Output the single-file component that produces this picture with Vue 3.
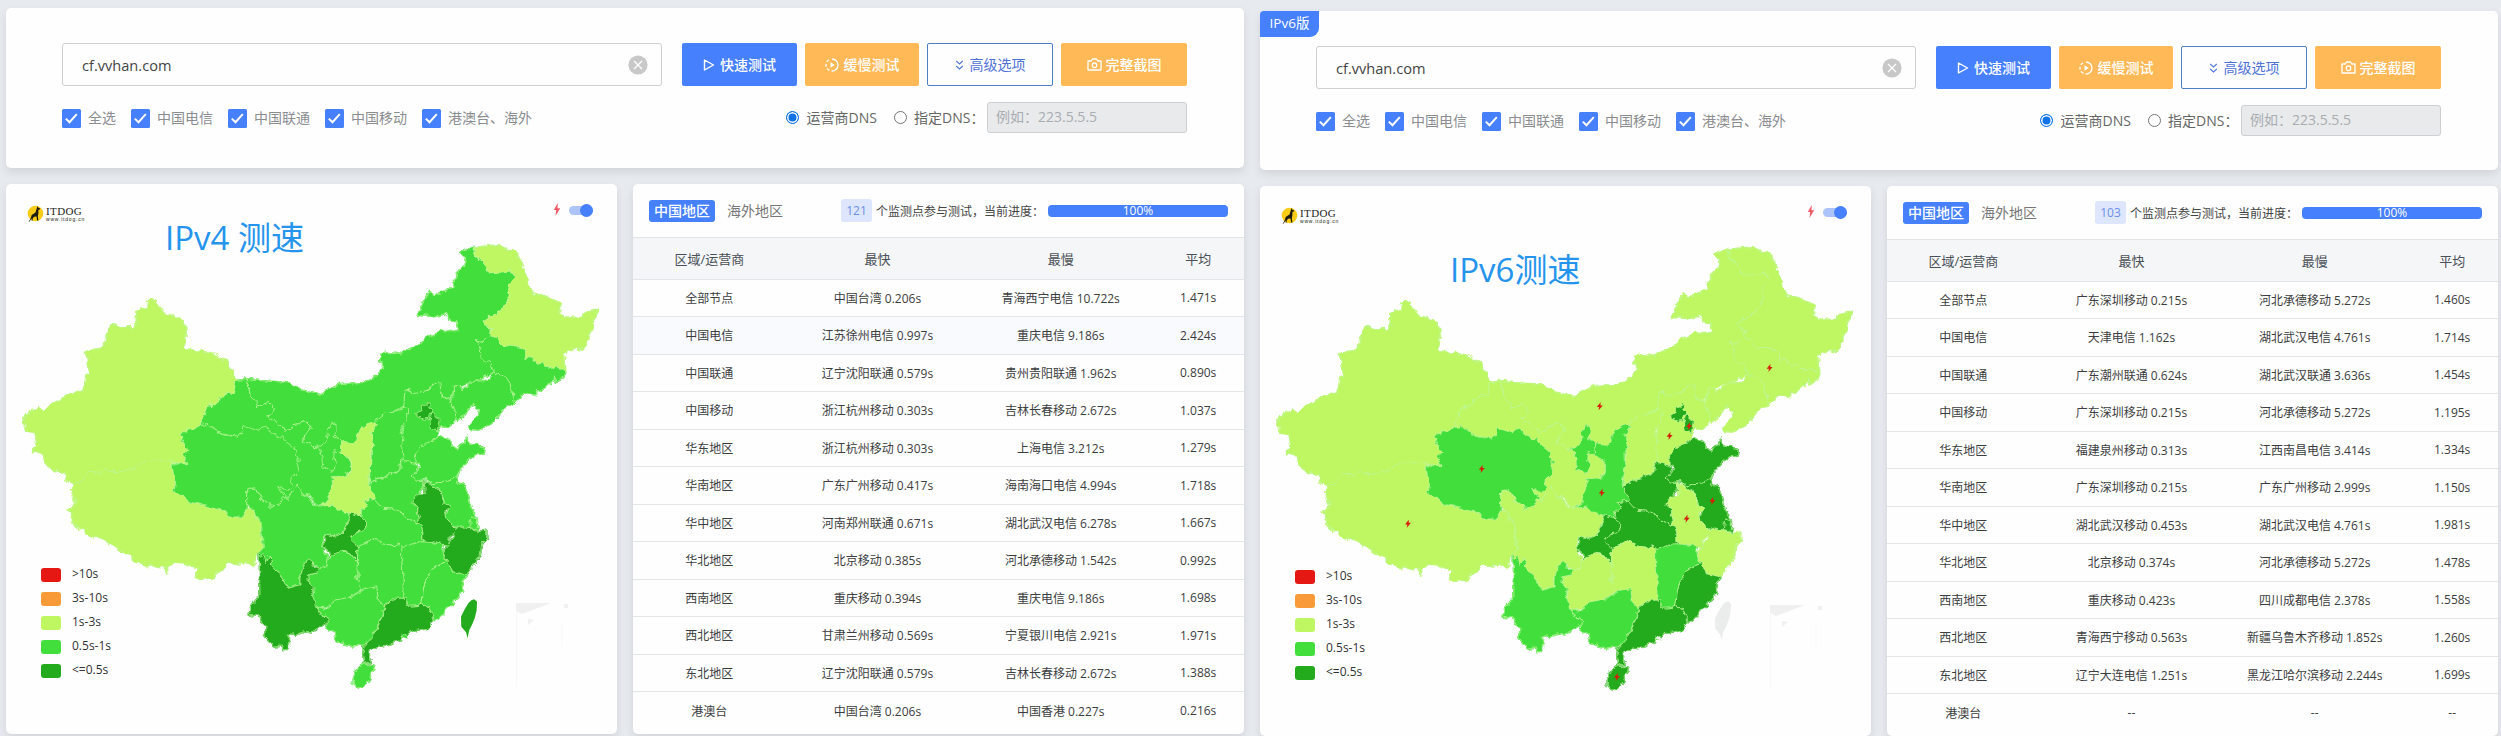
<script setup>
const L = '#bef761'
const M = '#42df3c'
const D = '#23aa1d'
const G = '#ebecec'

// Province outlines. Space "a" covers the whole country, space "c" is the finer eastern grid.
const provinces = [
  ['neimenggu', 'a', '612,563 700,570 717,573 745,588 772,596 795,605 845,577 905,574 930,555 955,530 945,505 955,483 1000,493 1020,472 1045,467 1060,445 1100,425 1142,425 1135,400 1120,392 1105,378 1085,385 1040,382 1050,350 1067,315 1090,323 1128,303 1128,290 1145,250 1160,235 1158,215 1147,208 1155,197 1183,190 1175,210 1203,228 1215,260 1265,255 1280,268 1268,300 1265,330 1250,365 1203,400 1220,425 1222,445 1190,455 1195,475 1198,500 1220,515 1228,540 1200,560 1150,580 1130,580 1125,610 1100,615 1095,580 1075,575 1070,590 1035,605 1022,605 1020,588 1008,590 1005,640 975,655 960,660 955,670 935,682 920,700 885,760 850,745 835,720 812,750 783,752 758,738 755,718 772,705 770,683 730,690 712,706 690,690 664,668 680,640 668,628 640,640 622,605 618,580'],
  ['gansu', 'a', '588,565 612,563 618,580 622,605 640,628 640,640 668,628 680,640 678,655 664,668 678,672 690,690 712,706 730,690 770,683 772,705 755,718 758,738 783,752 820,750 848,765 872,785 875,815 850,840 830,845 825,890 810,912 785,918 775,890 750,885 740,865 700,920 650,880 640,750 607,710 592,725 515,700 498,692 502,680 515,638 530,635 557,605 580,600'],
  ['heilongjiang', 'a', '1183,190 1210,186 1240,183 1255,195 1275,197 1285,205 1300,240 1312,275 1320,315 1365,330 1395,350 1395,380 1410,387 1445,388 1460,372 1490,367 1478,395 1475,420 1450,480 1430,472 1405,490 1408,540 1385,525 1358,532 1350,512 1338,520 1325,503 1308,500 1308,478 1275,470 1245,465 1235,445 1220,440 1218,428 1228,420 1215,418 1203,400 1250,365 1265,330 1268,300 1280,268 1270,250 1265,258 1215,262 1203,228 1190,218 1175,210'],
  ['jilin', 'a', '1188,450 1197,458 1222,440 1235,445 1245,465 1275,470 1308,478 1308,500 1325,503 1338,520 1350,512 1358,532 1385,525 1408,540 1405,557 1385,570 1378,555 1370,575 1350,592 1335,590 1335,608 1308,600 1280,628 1275,600 1268,570 1255,555 1228,540 1220,515 1198,505 1195,475'],
  ['liaoning', 'a', '1228,540 1255,555 1268,570 1275,600 1280,628 1260,640 1240,668 1220,690 1215,695 1190,705 1172,703 1170,690 1185,670 1192,645 1180,632 1165,645 1155,665 1138,680 1135,655 1117,630 1130,610 1128,582 1145,580 1150,592 1185,568 1215,565'],
  ['hebei', 'a', '1005,640 1008,590 1020,588 1025,605 1050,597 1070,592 1075,575 1095,570 1098,612 1120,615 1117,630 1135,655 1138,665 1130,682 1112,697 1098,695 1090,722 1068,740 1042,770 1038,790 1028,800 995,790 1000,770 995,745 1005,720 1000,690 1008,660'],
  ['xinjiang', 'a', '57,685 62,663 80,650 100,643 108,652 128,630 150,622 165,610 210,590 214,550 224,545 216,495 207,486 235,478 258,473 263,450 277,407 300,414 333,414 340,402 338,372 366,358 368,338 386,338 392,352 410,376 447,390 462,412 463,438 458,470 466,480 525,487 563,511 575,540 588,565 583,590 580,600 557,605 530,635 515,638 502,680 498,692 485,700 446,715 458,722 453,738 460,750 469,762 458,778 465,800 430,796 415,790 385,786 355,797 345,808 310,824 275,822 265,815 250,828 218,824 205,845 200,857 185,860 168,848 162,825 135,818 114,803 107,770 82,763 90,755 86,716 64,710 66,692'],
  ['xizang', 'a', '200,857 205,845 218,824 250,828 265,815 275,822 310,824 345,808 355,797 385,786 415,790 430,796 428,805 432,830 437,850 434,872 440,885 470,905 500,915 530,925 560,933 570,950 605,950 615,925 625,930 636,950 648,975 650,1010 654,1045 648,1055 636,1062 633,1082 628,1090 612,1075 605,1083 575,1080 565,1083 560,1095 540,1105 530,1122 490,1125 487,1105 495,1095 470,1085 430,1078 417,1090 417,1110 410,1090 385,1090 350,1085 330,1070 328,1055 300,1045 250,1008 235,1008 183,970 178,940 170,930 188,915 182,890 176,872 185,860'],
  ['qinghai', 'a', '446,715 485,700 498,692 515,690 520,698 540,708 565,720 592,725 605,705 607,692 640,702 660,698 700,728 720,745 732,755 735,775 744,795 738,825 725,838 722,855 728,860 718,878 695,865 700,880 712,890 705,905 700,920 685,920 665,912 655,905 640,878 632,868 620,870 613,880 615,925 605,950 570,950 560,933 530,925 500,915 470,905 440,885 434,872 437,850 432,830 428,805 436,800 465,800 458,778 469,762 460,750 453,738 458,722'],
  ['ningxia', 'c', '285,199 302,198 318,186 322,155 335,130 348,130 348,150 342,170 362,184 362,210 340,213 338,235 350,250 342,262 336,280 325,270 308,260 305,225 298,208'],
  ['shanxi', 'c', '468,122 500,100 520,98 550,85 562,85 563,110 555,130 540,145 550,165 545,205 550,235 540,250 540,270 500,285 448,308 452,240 458,190 455,160'],
  ['sichuan', 'c', '118,520 130,500 125,440 110,410 95,385 80,370 80,345 85,325 105,325 120,355 155,380 180,370 190,350 205,360 218,335 232,318 250,345 270,355 280,380 300,378 340,375 390,400 375,450 340,470 312,465 305,500 320,530 325,545 300,565 278,550 265,535 240,585 240,615 205,625 180,585 160,570 148,528 135,548'],
  ['shaanxi', 'c', '468,122 462,150 450,160 460,190 450,215 452,250 445,300 455,325 465,358 428,362 440,375 425,385 422,412 400,402 385,398 355,390 340,375 306,378 330,362 322,345 338,325 336,290 375,288 395,278 395,240 362,215 362,185 395,190 408,185 415,160 432,135'],
  ['henan', 'c', '448,308 500,288 540,270 543,240 585,250 592,258 575,290 590,303 612,305 615,315 600,335 580,375 592,385 600,432 582,425 565,418 545,395 520,388 490,385 468,362 455,330'],
  ['shandong', 'c', '588,245 590,220 615,190 655,175 665,172 695,180 695,200 715,208 740,172 750,192 793,200 790,218 765,225 745,240 712,275 715,290 695,292 690,303 660,305 640,312 618,298 590,303 575,290 605,255'],
  ['jiangsu', 'c', '618,298 640,312 660,305 690,303 700,290 735,320 750,375 765,405 775,440 750,448 705,440 675,415 690,375 675,370 660,330 635,315'],
  ['shanghai', 'c', '752,410 772,418 772,450 748,445'],
  ['anhui', 'c', '612,305 640,318 650,330 665,340 670,370 690,375 688,385 675,388 680,420 705,440 705,455 690,470 685,495 660,492 640,485 630,492 605,475 605,450 590,430 600,415 592,400 595,385 575,370 590,345 615,340 615,325'],
  ['hubei', 'c', '430,362 465,358 490,385 520,388 545,395 565,418 582,425 600,432 605,450 605,475 610,485 560,500 520,500 490,492 460,478 440,490 415,498 412,515 395,490 392,468 425,455 440,440 435,420 422,412 425,390 440,375'],
  ['chongqing', 'c', '392,400 415,405 438,425 440,440 425,455 395,465 400,485 412,505 412,545 395,525 368,510 360,525 330,530 320,510 305,500 318,480 312,465 340,470 360,465 375,450 385,425'],
  ['hunan', 'c', '415,498 440,490 460,478 490,492 520,500 540,490 555,505 545,530 550,600 550,655 520,655 490,680 475,660 470,625 440,625 420,635 410,610 415,590 412,540'],
  ['jiangxi', 'c', '545,500 600,485 640,488 670,495 665,510 680,545 640,560 620,590 610,630 605,675 585,678 565,685 560,660 548,655 550,600 545,540'],
  ['zhejiang', 'c', '705,445 725,438 750,448 775,455 800,450 800,475 785,490 780,530 765,550 740,585 700,575 690,555 680,550 668,515 685,495 700,470'],
  ['fujian', 'c', '680,545 700,575 740,585 725,605 728,630 710,655 690,680 645,725 635,700 625,680 605,675 610,630 620,590 640,560'],
  ['guizhou', 'c', '260,585 290,580 300,565 320,560 325,535 365,512 395,525 412,545 410,590 422,632 380,655 340,662 320,680 290,685 280,660 285,620 258,600'],
  ['guangxi', 'c', '290,680 320,690 345,660 400,650 440,628 470,620 475,660 495,680 480,720 460,765 432,795 395,797 350,785 340,755 318,740 325,710 300,705'],
  ['guangdong', 'c', '495,675 530,655 560,655 560,680 605,675 628,680 640,725 620,745 570,755 555,775 540,780 500,795 470,800 450,810 453,848 432,848 428,820 432,800 445,785 465,760 480,725'],
  ['yunnan', 'c', '118,520 130,530 135,548 148,528 160,570 180,585 205,625 240,615 240,585 265,535 278,545 275,558 300,565 295,578 260,585 262,605 280,620 275,640 290,680 300,705 325,712 325,725 280,755 255,755 235,762 205,762 205,808 190,808 185,795 158,798 135,770 135,740 120,710 88,705 92,680 120,645'],
  ['beijing', 'c', '590,100 605,90 605,78 618,75 622,67 632,80 643,85 638,100 625,105 628,115 610,118 592,110'],
  ['tianjin', 'c', '635,105 643,98 650,115 658,118 655,135 652,153 635,145 628,125'],
  ['hainan', 'c', '400,875 430,853 465,855 450,895 428,925 400,915'],
  ['taiwan', 'c', '723,710 733,690 745,670 754,661 763,658 771,665 770,690 765,712 758,730 747,752 743,775 738,757 724,740']
]

const toPage = {
  a: (x, y) => [x / 2.489, 180 + y / 2.82],
  c: (x, y) => [220 + x / 3, 380 + y / 3]
}
const shapes = provinces.map(([id, space, pts]) => ({
  id,
  points: pts.split(' ').map(p => {
    const [x, y] = p.split(',').map(Number)
    return toPage[space](x, y).map(v => v.toFixed(1)).join(',')
  }).join(' ')
}))
const mainland = shapes.filter(s => s.id !== 'taiwan')
const taiwan = shapes.find(s => s.id === 'taiwan')

function palette(base, groups) {
  const out = {}
  for (const p of provinces) out[p[0]] = base
  for (const [color, ids] of groups) for (const id of ids.split(' ')) out[id] = color
  return out
}

const carriers = ['全选', '中国电信', '中国联通', '中国移动', '港澳台、海外']
const legend = [
  ['#e51814', '>10s'], ['#f79a37', '3s-10s'], [L, '1s-3s'], [M, '0.5s-1s'], [D, '<=0.5s']
]

const panels = [
  {
    key: 'v4', badge: '', title: 'IPv4 测速', nodes: 121, hover: 1, bolts: [],
    colors: palette(M, [[L, 'xinjiang xizang heilongjiang shaanxi'], [D, 'beijing tianjin anhui zhejiang chongqing yunnan guangdong taiwan']]),
    rows: [
      ['全部节点', '中国台湾 0.206s', '青海西宁电信 10.722s', '1.471s'],
      ['中国电信', '江苏徐州电信 0.997s', '重庆电信 9.186s', '2.424s'],
      ['中国联通', '辽宁沈阳联通 0.579s', '贵州贵阳联通 1.962s', '0.890s'],
      ['中国移动', '浙江杭州移动 0.303s', '吉林长春移动 2.672s', '1.037s'],
      ['华东地区', '浙江杭州移动 0.303s', '上海电信 3.212s', '1.279s'],
      ['华南地区', '广东广州移动 0.417s', '海南海口电信 4.994s', '1.718s'],
      ['华中地区', '河南郑州联通 0.671s', '湖北武汉电信 6.278s', '1.667s'],
      ['华北地区', '北京移动 0.385s', '河北承德移动 1.542s', '0.992s'],
      ['西南地区', '重庆移动 0.394s', '重庆电信 9.186s', '1.698s'],
      ['西北地区', '甘肃兰州移动 0.569s', '宁夏银川电信 2.921s', '1.971s'],
      ['东北地区', '辽宁沈阳联通 0.579s', '吉林长春移动 2.672s', '1.388s'],
      ['港澳台', '中国台湾 0.206s', '中国香港 0.227s', '0.216s']
    ]
  },
  {
    key: 'v6', badge: 'IPv6版', title: 'IPv6测速', nodes: 103, hover: -1,
    bolts: [[515.6, 366], [345.8, 404.3], [415.6, 434], [435.2, 424.2], [227.8, 467], [347.8, 490.8], [458.4, 499], [432.7, 516.7], [154, 521.7], [362.9, 674.9]],
    colors: palette(L, [
      [M, 'qinghai ningxia shaanxi jiangxi guangxi yunnan'],
      [D, 'beijing tianjin henan shandong jiangsu shanghai hubei chongqing fujian guangdong hainan'],
      [G, 'taiwan']
    ]),
    rows: [
      ['全部节点', '广东深圳移动 0.215s', '河北承德移动 5.272s', '1.460s'],
      ['中国电信', '天津电信 1.162s', '湖北武汉电信 4.761s', '1.714s'],
      ['中国联通', '广东潮州联通 0.624s', '湖北武汉联通 3.636s', '1.454s'],
      ['中国移动', '广东深圳移动 0.215s', '河北承德移动 5.272s', '1.195s'],
      ['华东地区', '福建泉州移动 0.313s', '江西南昌电信 3.414s', '1.334s'],
      ['华南地区', '广东深圳移动 0.215s', '广东广州移动 2.999s', '1.150s'],
      ['华中地区', '湖北武汉移动 0.453s', '湖北武汉电信 4.761s', '1.981s'],
      ['华北地区', '北京移动 0.374s', '河北承德移动 5.272s', '1.478s'],
      ['西南地区', '重庆移动 0.423s', '四川成都电信 2.378s', '1.558s'],
      ['西北地区', '青海西宁移动 0.563s', '新疆乌鲁木齐移动 1.852s', '1.260s'],
      ['东北地区', '辽宁大连电信 1.251s', '黑龙江哈尔滨移动 2.244s', '1.699s'],
      ['港澳台', '--', '--', '--']
    ]
  }
]
</script>

<template>
  <div class="page">
    <section v-for="p in panels" :key="p.key" class="panel" :class="p.key">
      <div class="card search">
        <span v-if="p.badge" class="ribbon">{{ p.badge }}</span>
        <div class="line">
          <div class="url">
            <span>cf.vvhan.com</span>
            <svg width="20" height="20" viewBox="0 0 20 20"><circle cx="10" cy="10" r="9.6" fill="#c8c8c8" /><path d="M6 6l8 8M14 6l-8 8" stroke="#fff" stroke-width="1.3" /></svg>
          </div>
          <div class="btn blue">
            <svg width="12" height="14" viewBox="0 0 12 14"><path d="M1.5 2v10l9-5z" fill="none" stroke="#fff" stroke-width="1.4" stroke-linejoin="round" /></svg>
            <span>快速测试</span>
          </div>
          <div class="btn orange slow">
            <svg width="14" height="14" viewBox="0 0 14 14"><circle cx="7" cy="7" r="6" fill="none" stroke="#fff" stroke-width="1.3" stroke-dasharray="18.8 2.2 2.9 2 2.9 2 2.9 4" transform="rotate(-90 7 7)" /><path d="M5.500 4.200v5.600L9.800 7z" fill="#fff" /></svg>
            <span>缓慢测试</span>
          </div>
          <div class="btn ghost">
            <svg width="9" height="12" viewBox="0 0 9 12"><path d="M1.200 2l3.300 3 3.300-3M1.200 7l3.300 3 3.300-3" fill="none" stroke="#5577d8" stroke-width="1.2" /></svg>
            <span>高级选项</span>
          </div>
          <div class="btn orange shot">
            <svg width="15" height="13" viewBox="0 0 15 13"><path d="M1 3h3.200L5.500 1h4l1.300 2H14v9H1z" fill="none" stroke="#fff" stroke-width="1.3" stroke-linejoin="round" /><circle cx="7.500" cy="7.300" r="2.300" fill="none" stroke="#fff" stroke-width="1.3" /></svg>
            <span>完整截图</span>
          </div>
        </div>
        <div class="line second">
          <label v-for="c in carriers" :key="c" class="check">
            <svg width="19" height="19" viewBox="0 0 19 19"><rect width="19" height="19" rx="1.5" fill="#4680fd" /><path d="M3.800 9.600l3.700 3.600 7.300-8" fill="none" stroke="#fff" stroke-width="2" /></svg>
            <span>{{ c }}</span>
          </label>
          <div class="dns">
            <i class="radio on"></i><span class="op">运营商DNS</span>
            <i class="radio"></i><span class="custom">指定DNS：</span>
            <div class="ph">例如：223.5.5.5</div>
          </div>
        </div>
      </div>

      <div class="lower">
        <div class="card map">
          <svg class="china" width="611" height="550" viewBox="6 184 611 550">
            <defs>
              <filter :id="'coast-' + p.key" x="0" y="0" width="1" height="1" color-interpolation-filters="sRGB">
                <feTurbulence type="fractalNoise" baseFrequency="0.16" numOctaves="2" seed="4" result="n" />
                <feDisplacementMap in="SourceGraphic" in2="n" scale="6.5" xChannelSelector="R" yChannelSelector="G" />
              </filter>
            </defs>
            <g fill="#f0f0f0">
              <path d="M516 603h35l-29 11-6-3zM528 619l6 1-6 5zM564 604h4v4h-4z" />
              <path d="M516.500 612v75M562 622v24" stroke="#f8f8f8" />
            </g>
            <g :filter="`url(#coast-${p.key})`">
              <polygon v-for="s in mainland" :key="'u' + s.id" :points="s.points" :fill="p.colors[s.id]" :stroke="p.colors[s.id]" stroke-width="1.7" stroke-linejoin="round" />
              <polygon v-for="s in mainland" :key="s.id" :points="s.points" :fill="p.colors[s.id]" stroke="#bdf79c" stroke-width=".75" stroke-linejoin="round" />
              <circle cx="405" cy="636.500" r="3" :fill="p.key === 'v4' ? M : G" stroke="#c5f9a6" stroke-width=".8" />
            </g>
            <polygon :points="taiwan.points" :fill="p.colors.taiwan" />
            <path v-for="(b, i) in p.bolts" :key="i" :transform="`translate(${b[0]} ${b[1]})`" d="M.8-4L-3 .8h2.300L-1.200 4 3-.9H.7z" fill="#d4200c" />
          </svg>
          <div class="maphead">
            <svg class="dog" width="17" height="18" viewBox="0 0 17 18"><circle cx="8.500" cy="8.500" r="7.800" fill="#f8cc17" /><path d="M10.500 1l.8 1.800 2 .7-.5 1-1.300.3-.2 4.200-.5 2 .6 4.500h-1.300l-.6-4-2.500.2-1.500 2.300.3 1.500H4.600l.2-2.200-2.300 3.200-.9.500 2.200-4 .9-3 3.800-2.500z" fill="#1d1a10" /></svg>
            <div class="brand"><b>ITDOG</b><small>www.itdog.cn</small></div>
            <svg class="flash" width="8" height="13" viewBox="0 0 8 13"><path d="M4.800 0L.8 7h2.400L2.500 13 7.200 5.200H4.500z" fill="#f05a66" /></svg>
            <i class="toggle"></i>
          </div>
          <h2 class="maptitle">{{ p.title }}</h2>
          <ul class="legend">
            <li v-for="l in legend" :key="l[1]">
              <svg width="20" height="14"><rect width="20" height="14" rx="3" :fill="l[0]" /></svg>
              <span>{{ l[1] }}</span>
            </li>
          </ul>
        </div>

        <div class="card stats">
          <div class="tabs">
            <span class="tab active">中国地区</span>
            <span class="tab idle">海外地区</span>
            <span class="count">{{ p.nodes }}</span>
            <span class="desc">个监测点参与测试，当前进度：</span>
            <div class="bar">100%</div>
          </div>
          <div class="row head"><span>区域/运营商</span><span>最快</span><span>最慢</span><span>平均</span></div>
          <div v-for="(r, i) in p.rows" :key="i" class="row" :class="{ hover: i === p.hover }">
            <span v-for="(c, j) in r" :key="j">{{ c }}</span>
          </div>
        </div>
      </div>
    </section>
  </div>
</template>

<style>
body { background: #e7eaee; overflow: hidden; }
</style>

<style scoped>
* { box-sizing: border-box; }
.page {
  width: 2501px; height: 736px; overflow: hidden;
  display: flex; gap: 16px; padding: 8px 0 0 6px;
  background: #e7eaee;
  font-family: "Open Sans", "Noto Sans CJK SC", sans-serif;
  font-size: 14px; color: #444;
}
.panel { width: 1238px; flex: none; display: flex; flex-direction: column; gap: 16px; }
.v6 { margin-top: 3px; }
.card { background: #fefefe; border-radius: 5px; box-shadow: 0 4px 8px rgba(60, 70, 85, .13); position: relative; }
.search { height: 160px; padding: 35px 57px 0 56px; }
.ribbon {
  position: absolute; left: 0; top: 0; width: 59px; height: 26px; line-height: 25px;
  text-align: center; color: #fff; background: #4680fd; font-size: 13.5px;
  border-radius: 4px 0 9px 0;
}
.line { display: flex; align-items: center; white-space: nowrap; }
.url {
  width: 600px; height: 43px; border: 1px solid #cfcfd0; border-radius: 3px; margin-right: 20px;
  display: flex; align-items: center; justify-content: space-between; padding: 0 13px 0 19px;
  font-size: 14.6px;
}
.btn {
  height: 43px; border-radius: 2px; display: flex; align-items: center; justify-content: center;
  gap: 5px; color: #fff; margin-right: 8px; font-weight: 500;
}
.btn span { margin-top: -2px; }
.blue { width: 115px; background: #4680fd; }
.slow { width: 114px; }
.orange { background: #ffb957; }
.ghost { width: 126px; border: 1px solid #4c7fc4; color: #4f73d6; gap: 6px; font-weight: 400; }
.shot { width: 126px; margin-right: 0; gap: 4px; }
.second { height: 31px; margin-top: 16px; }
.check { display: flex; align-items: center; gap: 7px; margin-right: 15px; color: #8b8d90; margin-top: 1px; }
.check span { margin-top: -2px; }
.dns { margin-left: auto; display: flex; align-items: center; color: #666; }
.radio { width: 13px; height: 13px; border: 1px solid #767676; border-radius: 50%; background: #fff; }
.radio.on { border: 1.5px solid #0f73e8; background: #0f73e8; box-shadow: inset 0 0 0 1.5px #fff; }
.op { margin: -1px 17px 0 8px; }
.custom { margin: -1px 0 0 7px; width: 73px; }
.ph {
  width: 200px; height: 31px; line-height: 28px; padding-left: 8px; color: #a9adb1;
  background: #e8eaec; border: 1px solid #cdd0d3; border-radius: 3px;
}
.lower { display: flex; gap: 16px; }
.map { width: 611px; height: 550px; display: flex; flex-direction: column; }
.china { position: absolute; left: 0; top: 0; }
.maphead { display: flex; align-items: center; padding: 20px 24px 0 21px; height: 40px; }
.brand { display: flex; flex-direction: column; margin-left: 2px; color: #222; width: 44px; white-space: nowrap; }
.brand b { font: 400 11px/10px "Liberation Serif", serif; letter-spacing: .4px; }
.brand small { font: 5px/6px "Liberation Sans", sans-serif; letter-spacing: .8px; }
.flash { margin: -9px 8px 0 auto; }
.toggle { width: 24px; height: 9px; border-radius: 5px; background: #adc4fb; position: relative; margin-top: -8px; }
.toggle::after { content: ""; position: absolute; right: 0; top: -2px; width: 13px; height: 13px; border-radius: 50%; background: #4680fd; }
.maptitle { position: absolute; margin: 0; left: 159px; top: 31px; font-size: 33px; line-height: 46px; font-weight: 400; color: #2594ec; white-space: nowrap; }
.v6 .maptitle { left: 190px; top: 61px; }
.legend { position: relative; list-style: none; margin: auto 0 51px 35px; padding: 0; color: #333; font-size: 12px; }
.legend li { display: flex; align-items: center; height: 24px; gap: 11px; }
.legend span { margin-top: -3px; }
.stats { width: 611px; height: 550px; font-size: 12px; }
.tabs { height: 54px; display: flex; align-items: center; padding: 0 16px; white-space: nowrap; border-bottom: 1px solid #e2e4e7; }
.tab { font-size: 14px; line-height: 22px; }
.active { width: 66px; text-align: center; background: #4680fd; color: #fff; border-radius: 3px; font-weight: 500; line-height: 21px; height: 22px; }
.idle { margin-left: 12px; color: #777; width: 58px; }
.count { margin-left: 56px; width: 31px; height: 23px; line-height: 23px; text-align: center; border-radius: 3px; background: #dde6fd; color: #6c8fe8; }
.desc { margin-left: 4px; width: 172px; }
.bar { width: 180px; height: 12px; line-height: 12px; border-radius: 4px; background: #4680fd; color: #fff; text-align: center; }
.row { display: grid; grid-template-columns: 25% 30% 30% 15%; height: 37.5px; align-items: center; text-align: center; border-bottom: 1px solid #e3e6e9; white-space: nowrap; color: #3c3d40; }
.row:last-child { border-bottom: 0; }
.head { height: 41.5px; background: #f5f6f7; font-size: 13px; color: #495057; }
.hover { background: #f9fafe; }
</style>
